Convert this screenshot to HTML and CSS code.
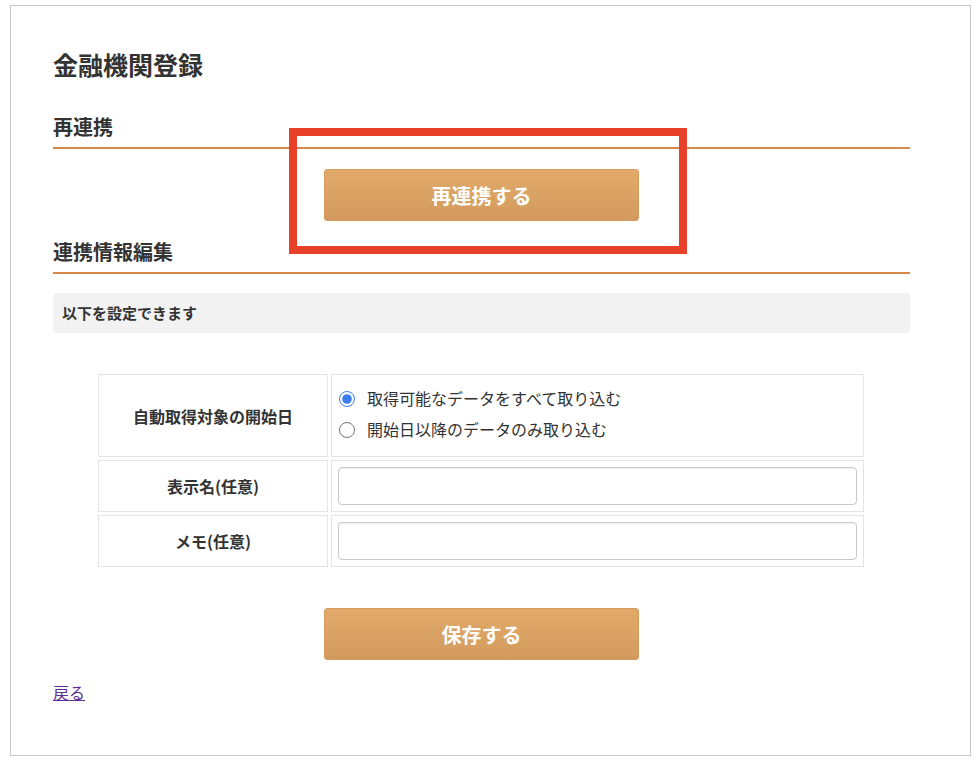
FILE: index.html
```html
<!DOCTYPE html>
<html lang="ja">
<head>
    <meta charset="UTF-8">
    <meta name="viewport" content="width=device-width, initial-scale=1.0">
    <title>金融機関登録</title>
    <link rel="stylesheet" href="styles.css">
</head>
<body>
    <div class="frame">
        <h1 class="page-title">金融機関登録</h1>

        <!-- 再連携 -->
        <h2 class="section-title">再連携</h2>
        <div class="btn-area btn-area-top">
            <button class="btn">再連携する</button>
            <div class="highlight"></div>
        </div>

        <!-- 連携情報編集 -->
        <h2 class="section-title">連携情報編集</h2>
        <div class="note">以下を設定できます</div>

        <table class="form-table">
            <tr class="row-start">
                <th>自動取得対象の開始日</th>
                <td>
                    <label class="radio"><input type="radio" name="start" checked>取得可能なデータをすべて取り込む</label>
                    <label class="radio"><input type="radio" name="start">開始日以降のデータのみ取り込む</label>
                </td>
            </tr>
            <tr>
                <th>表示名(任意)</th>
                <td><input type="text" class="text-input"></td>
            </tr>
            <tr>
                <th>メモ(任意)</th>
                <td><input type="text" class="text-input"></td>
            </tr>
        </table>

        <div class="btn-area btn-area-bottom">
            <button class="btn">保存する</button>
        </div>

        <a href="#" class="back-link">戻る</a>
    </div>
</body>
</html>
```

FILE: styles.css
```css
body {
    margin: 0;
    font-family: "Noto Sans CJK JP", "Noto Sans", sans-serif;
    color: #333;
    background: #fff;
}

.frame {
    margin: 5px 3px 0 10px;
    height: 751px;
    border: 1px solid #c8c8c8;
    padding: 0 60px 0 42px;
    box-sizing: border-box;
}

.page-title {
    margin: 0;
    padding-top: 40px;
    font-size: 25px;
    line-height: 36px;
    font-weight: bold;
}

.section-title {
    margin: 0;
    font-size: 20px;
    line-height: 28px;
    font-weight: bold;
    padding-bottom: 6px;
    border-bottom: 2px solid #d4884a;
}

.page-title + .section-title {
    margin-top: 31px;
}

/* ボタン */
.btn-area {
    position: relative;
    display: flex;
    justify-content: center;
}

.btn-area-top {
    padding: 20px 0 17px;
}

.btn-area-bottom {
    padding: 38px 0 0;
}

.btn {
    width: 315px;
    height: 52px;
    border: 1px solid #d59a5e;
    border-radius: 3px;
    background: linear-gradient(#e2aa6a, #d29a5c);
    color: #fff;
    font-family: inherit;
    font-size: 20px;
    font-weight: bold;
    cursor: pointer;
}

/* 注目枠 */
.highlight {
    position: absolute;
    left: 236px;
    top: -21px;
    width: 398px;
    height: 126px;
    border: 8px solid #e8412a;
    box-sizing: border-box;
    pointer-events: none;
}

.note {
    margin-top: 19px;
    background: #f2f2f2;
    border-radius: 3px;
    height: 40px;
    line-height: 40px;
    padding-left: 9px;
    font-size: 15px;
    font-weight: bold;
}

/* フォーム */
.form-table {
    margin: 38px 0 0 42px;
    width: 772px;
    border-spacing: 3px;
    border-collapse: separate;
}

.form-table th,
.form-table td {
    border: 1px solid #e4e4e4;
}

.form-table th {
    width: 228px;
    font-size: 16px;
    font-weight: bold;
    padding: 0;
}

.form-table td {
    padding: 6px;
}

.row-start td {
    padding: 8px 7px 11px;
}

.radio {
    display: flex;
    align-items: center;
    font-size: 16px;
    line-height: 31px;
}

.radio input {
    margin: 0 12px 0 0;
    width: 16px;
    height: 16px;
    accent-color: #3b7cf0;
}

.text-input {
    display: block;
    width: 100%;
    height: 38px;
    box-sizing: border-box;
    border: 1px solid #c9c9c9;
    border-radius: 4px;
    box-shadow: inset 0 1px 1px rgba(0, 0, 0, 0.06);
}

.back-link {
    display: inline-block;
    margin-top: 20px;
    font-size: 16px;
    color: #5a2f96;
}
```
